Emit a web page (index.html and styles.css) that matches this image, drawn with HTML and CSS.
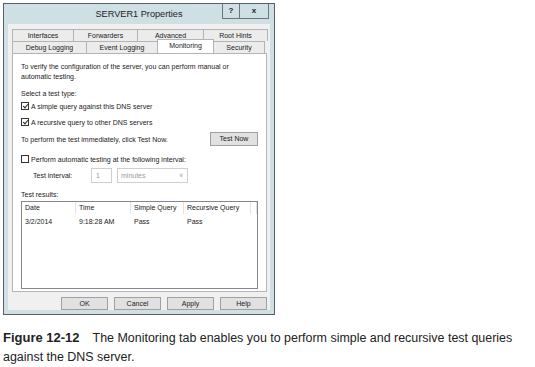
FILE: index.html
```html
<!DOCTYPE html>
<html lang="en">
<head>
 <meta charset="UTF-8">
 <title>SERVER1 Properties</title>
 <link rel="stylesheet" href="styles.css">
</head>
<body>
 <div class="window">
   <div class="titlebar">
     <span></span>
     <span class="title">SERVER1 Properties</span>
     <div class="caption-btns">
       <span class="cbtn help">?</span>
       <span class="cbtn close">x</span>
     </div>
   </div>

   <div class="client">
     <div class="tab-row">
       <div class="tab w61">Interfaces</div>
       <div class="tab w64">Forwarders</div>
       <div class="tab w66">Advanced</div>
       <div class="tab w64">Root Hints</div>
     </div>
     <div class="tab-row front">
       <div class="tab w74">Debug Logging</div>
       <div class="tab w71">Event Logging</div>
       <div class="tab w56 selected">Monitoring</div>
       <div class="tab w54">Security</div>
     </div>

     <div class="panel">
       <p class="intro">To verify the configuration of the server, you can perform manual or<br>automatic testing.</p>
       <p class="label">Select a test type:</p>
       <div class="check-row"><span class="box checked"></span>A simple query against this DNS server</div>
       <div class="check-row second"><span class="box checked"></span>A recursive query to other DNS servers</div>

       <div class="test-now">
         <span>To perform the test immediately, click Test Now.</span>
         <span class="btn wide">Test Now</span>
       </div>

       <div class="check-row auto"><span class="box"></span>Perform automatic testing at the following interval:</div>
       <div class="interval">
         <span class="interval-label">Test interval:</span>
         <span class="num-input">1</span>
         <span class="select">minutes<span class="chev">&#8744;</span></span>
       </div>

       <p class="label results-label">Test results:</p>
       <div class="list">
         <div class="list-head">
           <span class="col c1">Date</span>
           <span class="col c2">Time</span>
           <span class="col c3">Simple Query</span>
           <span class="col c4">Recursive Query</span>
           <span class="col c5"></span>
         </div>
         <div class="list-row">
           <span class="col c1">3/2/2014</span>
           <span class="col c2">9:18:28 AM</span>
           <span class="col c3">Pass</span>
           <span class="col c4">Pass</span>
         </div>
       </div>
     </div>

     <div class="dialog-buttons">
       <span class="btn">OK</span>
       <span class="btn">Cancel</span>
       <span class="btn">Apply</span>
       <span class="btn">Help</span>
     </div>
   </div>
 </div>

 <p class="caption"><b>Figure 12-12</b><span>The Monitoring tab enables you to perform simple and recursive test queries against the DNS server.</span></p>
</body>
</html>
```

FILE: styles.css
```css
body {
margin: 0;
background: #ffffff;
font-family: 'Liberation Sans', Arial, sans-serif;
color: #222;
}
.window {
margin: 3px 0 0 3px;
border: 1px solid #5a5f63;
background: #cfe0e5;
padding: 0 4px 4px 4px;
width: 262px;
}
.titlebar {
display: grid;
grid-template-columns: 1fr auto 1fr;
height: 20px;
}
.title {
font-size: 9.2px;
line-height: 21px;
color: #1e1e1e;
}
.caption-btns {
display: flex;
justify-content: flex-end;
align-items: flex-start;
}
.cbtn {
height: 14px;
border: 1px solid #6e7478;
border-top: none;
font-size: 8px;
font-weight: bold;
line-height: 13px;
text-align: center;
color: #222;
}
.help {
width: 16px;
border-right: none;
}
.close {
width: 28px;
margin-right: 1px;
}
.client {
background: #f0f0f0;
padding: 5px 3px 0 4px;
height: 281px;
font-size: 7px;
}
.tab-row {
display: flex;
height: 12px;
}
.tab {
box-sizing: border-box;
border: 1px solid #b4b4b4;
border-bottom: none;
margin-right: -1px;
background: #ececec;
text-align: center;
line-height: 11px;
white-space: nowrap;
}
.tab.selected {
background: #ffffff;
height: 14px;
margin-top: -2px;
position: relative;
z-index: 1;
line-height: 12px;
}
.w61 { width: 62px; }
.w64 { width: 65px; }
.w66 { width: 67px; }
.w74 { width: 75px; }
.w71 { width: 72px; }
.w56 { width: 57px; }
.w54 { width: 52px; }
.panel {
box-sizing: border-box;
width: 255px;
height: 239px;
border: 1px solid #b4b4b4;
background: #ffffff;
padding: 8px 8px 0 8px;
}
.panel p {
margin: 0;
}
.intro {
line-height: 10px;
}
.label {
margin-top: 7px !important;
line-height: 10px;
}
.check-row {
display: flex;
align-items: center;
height: 12px;
margin-top: 1px;
}
.check-row.second {
margin-top: 4px;
}
.check-row.auto {
margin-top: 7px;
}
.box {
box-sizing: border-box;
width: 8px;
height: 8px;
border: 1px solid #333;
background: #fff;
margin-right: 2px;
position: relative;
}
.box.checked::after {
content: '';
position: absolute;
left: 2px;
top: 0px;
width: 2px;
height: 4px;
border: solid #222;
border-width: 0 1px 1px 0;
transform: rotate(40deg);
}
.test-now {
display: flex;
justify-content: space-between;
align-items: center;
margin-top: 4px;
height: 14px;
}
.btn {
box-sizing: border-box;
display: inline-block;
width: 47px;
height: 13px;
border: 1px solid #a0a0a0;
background: #e1e1e1;
text-align: center;
line-height: 11px;
}
.btn.wide {
width: 48px;
height: 14px;
line-height: 12px;
}
.interval {
display: flex;
align-items: center;
margin-top: 3px;
height: 15px;
padding-left: 12px;
}
.interval-label {
width: 58px;
}
.num-input {
box-sizing: border-box;
width: 21px;
height: 15px;
border: 1px solid #cfcfcf;
color: #9a9a9a;
padding-left: 4px;
line-height: 13px;
}
.select {
box-sizing: border-box;
display: flex;
justify-content: space-between;
width: 71px;
height: 15px;
margin-left: 5px;
border: 1px solid #cfcfcf;
color: #9a9a9a;
padding: 0 4px 0 3px;
line-height: 13px;
}
.chev {
font-size: 6px;
}
.results-label {
margin-top: 7px !important;
}
.list {
box-sizing: border-box;
width: 237px;
height: 88px;
margin-top: 1px;
border: 1px solid #828790;
}
.list-head, .list-row {
display: flex;
height: 12px;
line-height: 12px;
}
.list-row {
margin-top: 2px;
}
.col {
box-sizing: border-box;
padding-left: 3px;
white-space: nowrap;
}
.list-head .col {
border-right: 1px solid #e3e3e3;
}
.c1 { width: 54px; }
.c2 { width: 55px; }
.c3 { width: 53px; }
.c4 { width: 67px; }
.c5 { flex: 1; }
.dialog-buttons {
display: flex;
justify-content: flex-end;
gap: 6px;
margin-top: 5px;
}
.caption {
margin: 13px 0 0 3px;
font-size: 12.45px;
line-height: 19px;
color: #222;
width: 528px;
}
.caption b {
display: inline-block;
font-size: 13px;
margin-right: 13px;
}
```
